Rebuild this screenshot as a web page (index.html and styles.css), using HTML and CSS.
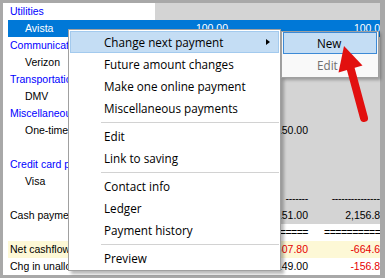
FILE: index.html
```html
<!DOCTYPE html>
<html>
<head>
<meta charset="utf-8">
<link rel="stylesheet" href="styles.css">
</head>
<body>
<div class="frame">
  <div class="sheet">
    <div class="row"><span class="lbl cat">Utilities</span><span class="num"></span><span class="num"></span><span class="num"></span></div>
    <div class="row sel"><span class="lbl item">Avista</span><span class="num">100.00</span><span class="num"></span><span class="num">100.00</span></div>
    <div class="row"><span class="lbl cat">Communications</span><span class="num"></span><span class="num"></span><span class="num"></span></div>
    <div class="row"><span class="lbl item">Verizon</span><span class="num"></span><span class="num"></span><span class="num"></span></div>
    <div class="row"><span class="lbl cat">Transportation</span><span class="num"></span><span class="num"></span><span class="num"></span></div>
    <div class="row"><span class="lbl item">DMV</span><span class="num"></span><span class="num"></span><span class="num"></span></div>
    <div class="row"><span class="lbl cat">Miscellaneous</span><span class="num"></span><span class="num"></span><span class="num"></span></div>
    <div class="row"><span class="lbl item">One-time</span><span class="num"></span><span class="num">150.00</span><span class="num"></span></div>
    <div class="row"><span class="lbl"></span><span class="num"></span><span class="num"></span><span class="num"></span></div>
    <div class="row"><span class="lbl cat">Credit card payments</span><span class="num"></span><span class="num"></span><span class="num"></span></div>
    <div class="row"><span class="lbl item">Visa</span><span class="num"></span><span class="num"></span><span class="num"></span></div>
    <div class="row"><span class="lbl"></span><span class="num"></span><span class="num dash">-------</span><span class="num dash">-----------------</span></div>
    <div class="row"><span class="lbl">Cash payments</span><span class="num"></span><span class="num">1,151.00</span><span class="num">2,156.80</span></div>
    <div class="row plain"><span class="lbl"></span><span class="num"></span><span class="num eq">=====</span><span class="num eq">===========</span></div>
    <div class="row total"><span class="lbl">Net cashflow</span><span class="num"></span><span class="num neg">-507.80</span><span class="num neg">-664.60</span></div>
    <div class="row plain"><span class="lbl">Chg in unallocated</span><span class="num"></span><span class="num">149.00</span><span class="num neg">-156.80</span></div>
  </div>

  <div class="menu">
    <div class="mi hot">Change next payment<span class="arr"></span></div>
    <div class="mi">Future amount changes</div>
    <div class="mi">Make one online payment</div>
    <div class="mi">Miscellaneous payments</div>
    <div class="sep"></div>
    <div class="mi">Edit</div>
    <div class="mi">Link to saving</div>
    <div class="sep"></div>
    <div class="mi">Contact info</div>
    <div class="mi">Ledger</div>
    <div class="mi">Payment history</div>
    <div class="sep"></div>
    <div class="mi">Preview</div>
  </div>

  <div class="submenu">
    <div class="mi focus">New</div>
    <div class="mi dis">Edit</div>
  </div>

  <svg class="annot" width="385" height="278" viewBox="0 0 385 278">
    <line x1="350.5" y1="68" x2="364" y2="118" stroke="#e2100f" stroke-width="8" stroke-linecap="round"/>
    <polygon points="344,46 362.5,65.5 338.5,72.5" fill="#e2100f"/>
  </svg>
</div>
</body>
</html>
```

FILE: styles.css
```css
html, body {
  margin: 0;
  padding: 0;
}

body {
  width: 385px;
  height: 278px;
  overflow: hidden;
  background: #a8a8a8;
}

.frame {
  position: relative;
  width: 385px;
  height: 278px;
  box-sizing: border-box;
  padding: 3px 5px 3px 3px;
}

.sheet {
  height: 272px;
  background: #ffffff;
  overflow: hidden;
  padding-left: 5px;
  font-family: "Liberation Sans", Arial, sans-serif;
  font-size: 10.5px;
  color: #000000;
}

.row {
  display: grid;
  grid-template-columns: 147px 76px 80px 78px;
  height: 17px;
  line-height: 17px;
  white-space: nowrap;
}

.row > span {
  overflow: hidden;
}

.lbl {
  padding-left: 2px;
}

.lbl.item {
  padding-left: 17px;
}

.cat {
  color: #0000ff;
}

.num {
  text-align: right;
  padding-right: 3px;
  background: #d4d4d4;
}

.row.sel {
  background: #0078d7;
  color: #ffffff;
}

.row.sel .num,
.row.plain .num,
.row.total .num {
  background: transparent;
}

.row.total {
  background: #fdf8d6;
}

.neg {
  color: #e60000;
}

.dash {
  letter-spacing: -0.3px;
}

.eq {
  letter-spacing: -0.5px;
}

/* context menu */
.menu,
.submenu {
  position: absolute;
  font-family: "Open Sans", "Noto Sans", sans-serif;
  font-size: 11.7px;
  color: #000000;
  border: 1px solid #a0a0a0;
}

.menu {
  left: 68px;
  top: 29px;
  width: 209px;
  padding: 1px;
  background: #ffffff;
  box-shadow: 3px 3px 3px rgba(0, 0, 0, 0.28);
}

.submenu {
  left: 281px;
  top: 31px;
  width: 94px;
  padding: 0 1px 1px 1px;
  background: #f9f9f9;
  box-shadow: 2px 2px 3px rgba(0, 0, 0, 0.28);
}

.mi {
  position: relative;
  height: 22px;
  line-height: 20px;
  box-sizing: border-box;
  padding-left: 33px;
  border: 1px solid transparent;
  white-space: nowrap;
}

.mi.hot {
  background: #c4ddf4;
  border-color: #a3caee;
}

.mi.focus {
  background: #c4ddf4;
  border-color: #3d8ad6;
}

.mi.dis {
  color: #6f6f6f;
}

.arr {
  position: absolute;
  right: 8px;
  top: 7px;
  width: 0;
  height: 0;
  border-left: 4px solid #000000;
  border-top: 3.5px solid transparent;
  border-bottom: 3.5px solid transparent;
}

.sep {
  height: 1px;
  margin: 3px 0 2px 31px;
  background: #d2d2d2;
}

.annot {
  position: absolute;
  left: 0;
  top: 0;
  pointer-events: none;
}
```
